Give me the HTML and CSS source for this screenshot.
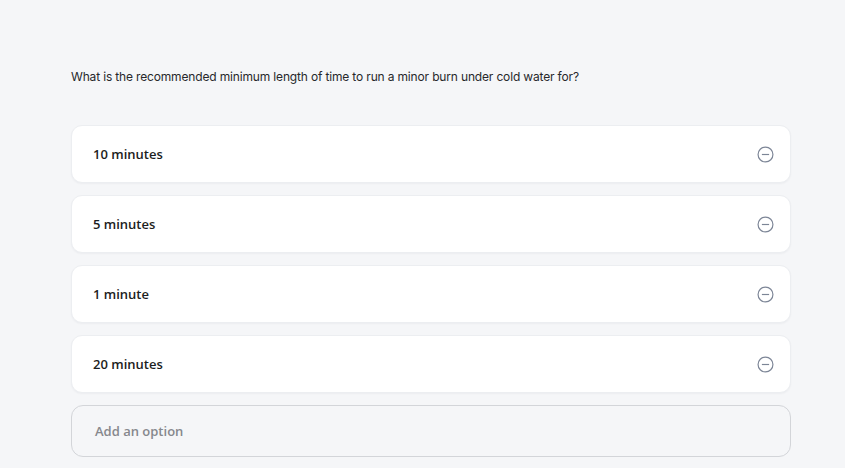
FILE: index.html
```html
<!DOCTYPE html>
<html>
<head>
<meta charset="utf-8">
<link rel="stylesheet" href="styles.css">
</head>
<body>
<main class="page">
  <p class="question">What is the recommended minimum length of time to run a minor burn under cold water for?</p>
  <ul class="options">
    <li class="option"><span class="label">10 minutes</span><svg class="remove" viewBox="0 0 16 16"><circle cx="8" cy="8" r="7" /><line x1="4.6" y1="8" x2="11.4" y2="8" /></svg></li>
    <li class="option"><span class="label">5 minutes</span><svg class="remove" viewBox="0 0 16 16"><circle cx="8" cy="8" r="7" /><line x1="4.6" y1="8" x2="11.4" y2="8" /></svg></li>
    <li class="option"><span class="label">1 minute</span><svg class="remove" viewBox="0 0 16 16"><circle cx="8" cy="8" r="7" /><line x1="4.6" y1="8" x2="11.4" y2="8" /></svg></li>
    <li class="option"><span class="label">20 minutes</span><svg class="remove" viewBox="0 0 16 16"><circle cx="8" cy="8" r="7" /><line x1="4.6" y1="8" x2="11.4" y2="8" /></svg></li>
  </ul>
  <div class="add">Add an option</div>
</main>
</body>
</html>
```
FILE: styles.css
```css
html, body {
  margin: 0;
  padding: 0;
  background: #f5f6f8;
  height: 100%;
  overflow: hidden;
}
.page {
  width: 720px;
  margin-left: 71px;
  padding-top: 68px;
  font-family: Inter, "Noto Sans", sans-serif;
}
.question {
  margin: 0 0 40px;
  font-size: 12px;
  line-height: 17px;
  color: #27282b;
  letter-spacing: -0.16px;
}
.options {
  list-style: none;
  margin: 0;
  padding: 0;
  display: flex;
  flex-direction: column;
  gap: 12px;
}
.option {
  height: 58px;
  box-sizing: border-box;
  background: #fff;
  border: 1px solid #eceef1;
  border-radius: 11px;
  box-shadow: 0 1px 2px rgba(20, 30, 50, 0.04);
  display: flex;
  align-items: center;
  justify-content: space-between;
  padding: 0 16px 0 21px;
}
.label, .add {
  font-family: "Open Sans", Inter, sans-serif;
  font-weight: 600;
  font-size: 13px;
  letter-spacing: 0;
}
.label {
  color: #1c1d21;
}
.remove {
  width: 17px;
  height: 17px;
  fill: none;
  stroke: #7c8596;
  stroke-width: 1.1;
}
.add {
  margin-top: 12px;
  height: 52px;
  box-sizing: border-box;
  border: 1px solid #d3d5d9;
  border-radius: 12px;
  display: flex;
  align-items: center;
  padding-left: 23px;
  color: #86888d;
}
```
